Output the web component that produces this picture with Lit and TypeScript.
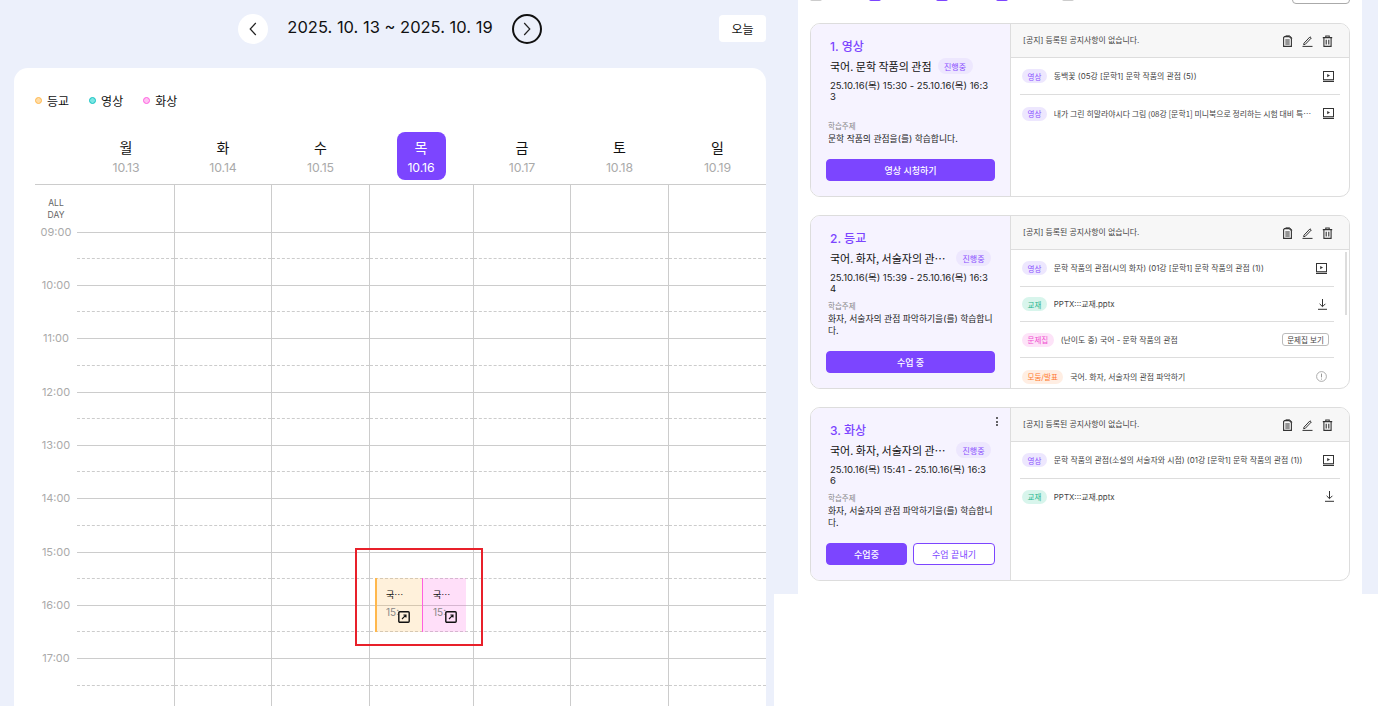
import { LitElement, css, html, svg } from "lit";
import { customElement } from "lit/decorators.js";

type ItemKind = "video" | "book" | "quiz" | "group";

interface LessonItem {
	kind: ItemKind;
	label: string;
	text: string;
	action: "play" | "download" | "quizBtn" | "info";
	long?: boolean;
}

interface Lesson {
	title: string;
	name: string;
	date: string;
	topic: string;
	buttons: string[];
	more?: boolean;
	scroll?: boolean;
	items: LessonItem[];
}

const lessons: Lesson[] = [
	{
		title: "1. 영상",
		name: "국어. 문학 작품의 관점",
		date: "25.10.16(목) 15:30 - 25.10.16(목) 16:33",
		topic: "문학 작품의 관점을(를) 학습합니다.",
		buttons: ["영상 시청하기"],
		items: [
			{ kind: "video", label: "영상", text: "동백꽃 (05강 [문학1] 문학 작품의 관점 (5))", action: "play" },
			{ kind: "video", label: "영상", text: "내가 그린 히말라야시다 그림 (08강 [문학1] 미니북으로 정리하는 시험 대비 특별 강의)", action: "play", long: true },
		],
	},
	{
		title: "2. 등교",
		name: "국어. 화자, 서술자의 관점 파악하기",
		date: "25.10.16(목) 15:39 - 25.10.16(목) 16:34",
		topic: "화자, 서술자의 관점 파악하기을(를) 학습합니다.",
		buttons: ["수업 중"],
		scroll: true,
		items: [
			{ kind: "video", label: "영상", text: "문학 작품의 관점(시의 화자) (01강 [문학1] 문학 작품의 관점 (1))", action: "play" },
			{ kind: "book", label: "교재", text: "PPTX:::교재.pptx", action: "download" },
			{ kind: "quiz", label: "문제집", text: "(난이도 중) 국어 - 문학 작품의 관점", action: "quizBtn" },
			{ kind: "group", label: "모둠/발표", text: "국어. 화자, 서술자의 관점 파악하기", action: "info" },
		],
	},
	{
		title: "3. 화상",
		name: "국어. 화자, 서술자의 관점 파악하기",
		date: "25.10.16(목) 15:41 - 25.10.16(목) 16:36",
		topic: "화자, 서술자의 관점 파악하기을(를) 학습합니다.",
		buttons: ["수업중", "수업 끝내기"],
		more: true,
		items: [
			{ kind: "video", label: "영상", text: "문학 작품의 관점(소설의 서술자와 시점) (01강 [문학1] 문학 작품의 관점 (1))", action: "play" },
			{ kind: "book", label: "교재", text: "PPTX:::교재.pptx", action: "download" },
		],
	},
];

const days = [
	{ name: "월", date: "10.13" },
	{ name: "화", date: "10.14" },
	{ name: "수", date: "10.15" },
	{ name: "목", date: "10.16", active: true },
	{ name: "금", date: "10.17" },
	{ name: "토", date: "10.18" },
	{ name: "일", date: "10.19" },
];

const hours = ["09:00", "10:00", "11:00", "12:00", "13:00", "14:00", "15:00", "16:00", "17:00"];

const events = [
	{ left: 340, width: 47, top: 393, height: 54, cls: "orange" },
	{ left: 387, width: 44, top: 393, height: 54, cls: "pink" },
];

const docIcon = svg`<svg class="ico" width="11" height="12" viewBox="0 0 11 12" fill="none" stroke="#333" stroke-width="1.1"><path d="M2.6 1.6h4.6l2.2 2v7.8H1.6V2.6z"/><path d="M3.6.7h4l2.6 2.4" stroke-width=".8"/><path d="M3.3 5h4.4M3.3 7h4.4M3.3 9h4.4"/></svg>`;
const penIcon = svg`<svg class="ico" width="11" height="12" viewBox="0 0 11 12" fill="none" stroke="#333" stroke-width="1"><path d="M2 8.2 8 1.8l1.3 1.2-6 6.3-1.7.4z"/><path d="M.5 11.4h10"/></svg>`;
const trashIcon = svg`<svg class="ico" width="11" height="12" viewBox="0 0 11 12" fill="none" stroke="#333" stroke-width="1.1"><path d="M.8 2.6h9.4M3.8 2.4V1h3.4v1.4"/><path d="M1.9 2.8v8.6h7.2V2.8"/><path d="M4.2 4.8v4.6M6.8 4.8v4.6"/></svg>`;
const playIcon = svg`<svg class="ico" width="11" height="11" viewBox="0 0 11 11" fill="none" stroke="#333"><rect x=".5" y=".5" width="10" height="8.2"/><path d="M4.2 2.9v3.4l2.8-1.7z" fill="#333" stroke="none"/><path d="M0 10.4h11" stroke-width="1.1"/></svg>`;
const downloadIcon = svg`<svg class="ico" width="9" height="11" viewBox="0 0 9 11" fill="none" stroke="#333"><path d="M4.5 0v7.4M1.6 4.8l2.9 2.9 2.9-2.9"/><path d="M0 10.3h9"/></svg>`;
const infoIcon = svg`<svg class="ico" width="11" height="11" viewBox="0 0 11 11" fill="none" stroke="#999" stroke-width=".8"><circle cx="5.5" cy="5.5" r="4.9"/><path d="M5.5 2.6v3.8M5.5 7.6v1" stroke-width="1"/></svg>`;
const linkIcon = svg`<svg class="link" width="12" height="12" viewBox="0 0 12 12" fill="none" stroke="#111"><rect x=".8" y=".8" width="10.4" height="10.4" rx="1" stroke-width="1.4"/><path d="M4 8l3.6-3.6M5.4 4h2.6v2.6" stroke-width="1.1"/></svg>`;

@customElement("app-root")
export class AppRoot extends LitElement {
	static override styles = css`
		:host {
			display: flex;
			height: 706px;
			overflow: hidden;
			background: #fff;
			font-family: Inter, "Noto Sans CJK KR", sans-serif;
			color: #111;
		}

		.left {
			width: 774px;
			flex: none;
			box-sizing: border-box;
			padding: 14px 8px 0 14px;
			background: #ecf0fb;
		}

		.top {
			display: grid;
			grid-template-columns: 1fr auto 1fr;
			align-items: start;
			height: 54px;
		}

		.nav {
			grid-column: 2;
			display: flex;
			align-items: center;
			gap: 19px;
			height: 30px;
		}

		.round {
			box-sizing: border-box;
			width: 30px;
			height: 30px;
			border-radius: 50%;
			background: #fff;
			display: flex;
			align-items: center;
			justify-content: center;
		}

		.round.focus {
			background: transparent;
			border: 2px solid #111;
		}

		.range {
			font-size: 16.5px;
			white-space: nowrap;
			padding-bottom: 5px;
		}

		.today {
			grid-column: 3;
			justify-self: end;
			width: 47px;
			height: 27px;
			margin-top: 1px;
			border-radius: 4px;
			background: #fff;
			font-size: 12px;
			display: flex;
			align-items: center;
			justify-content: center;
		}

		.calendar {
			background: #fff;
			border-radius: 14px 14px 0 0;
			padding-left: 21px;
			height: 640px;
		}

		.legend {
			display: flex;
			height: 64px;
			padding-top: 24px;
			box-sizing: border-box;
			gap: 20px;
			font-size: 12px;
		}

		.legend span {
			display: flex;
			align-items: center;
			gap: 5px;
			height: 16px;
		}

		.legend i {
			box-sizing: border-box;
			width: 7px;
			height: 7px;
			border-radius: 50%;
			border: 1px solid;
		}

		.legend .orange { background: #ffdca6; border-color: #ffb84d; }
		.legend .teal { background: #7ce6e3; border-color: #14c2c2; }
		.legend .pink { background: #ffc2f2; border-color: #ff5fe0; }

		.cols {
			display: grid;
			grid-template-columns: 42px 97px 97px 98px 104px 97px 98px 98px;
		}

		.week {
			height: 53px;
			box-sizing: border-box;
			border-bottom: 1px solid #ccc;
			padding-bottom: 4px;
		}

		.day {
			display: flex;
			flex-direction: column;
			align-items: center;
			justify-content: center;
			gap: 3px;
			padding-left: 1px;
		}

		.day b {
			font-weight: 400;
			font-size: 14px;
			line-height: 20px;
		}

		.day small {
			font-size: 12.3px;
			line-height: 14px;
			letter-spacing: -0.1px;
			color: #aaa;
		}

		.day.active small,
		.day.active b {
			color: #fff;
		}

		.day.active {
			width: 49px;
			padding-left: 0;
			justify-self: center;
			border-radius: 8px;
			background: #7c45ff;
		}

		.body {
			position: relative;
		}

		.allday {
			height: 46.6px;
		}

		.allday .label {
			font-size: 8.5px;
			line-height: 12px;
			color: #666;
			text-align: center;
			padding-top: 12px;
		}

		.cell {
			border-left: 1px solid #ccc;
		}

		.cell.first {
			border-left: 0;
		}

		.row {
			height: 53.33px;
		}

		.row .cell {
			border-top: 1px solid #ccc;
			box-sizing: border-box;
		}

		.half {
			height: 26.33px;
			box-sizing: border-box;
			border-bottom: 1px dashed #ccc;
		}

		.time {
			font-size: 11px;
			line-height: 14px;
			color: #aaa;
			text-align: center;
			transform: translateY(-7px);
		}

		.event {
			position: absolute;
			box-sizing: border-box;
			padding: 10px 0 0 9px;
			font-size: 9px;
			border-left: 2px solid;
		}

		.event.orange { background: rgba(255, 184, 77, 0.2); border-color: #ffb84d; }
		.event.pink { background: rgba(255, 95, 224, 0.2); border-color: #ff5fe0; border-left-width: 1px; padding-left: 10px; }

		.event .name {
			width: 21px;
			line-height: 14px;
			font-family: "Noto Sans CJK JP", Inter, sans-serif;
			white-space: nowrap;
			overflow: hidden;
			text-overflow: ellipsis;
		}

		.event .at {
			width: 13px;
			margin-top: 4px;
			font-size: 10px;
			line-height: 12px;
			overflow: hidden;
			white-space: nowrap;
			color: #888;
		}

		.link {
			position: absolute;
			left: 21px;
			top: 33px;
		}

		.event.pink .link {
			left: 22px;
		}

		.mark {
			position: absolute;
			left: 320px;
			top: 363px;
			width: 128px;
			height: 98px;
			box-sizing: border-box;
			border: 2px solid #e8202a;
		}

		.right {
			width: 604px;
			flex: none;
			height: 594px;
			box-sizing: border-box;
			padding: 0 16px 0 24px;
			background: #ecf0fb;
		}

		.panel {
			height: 100%;
			background: #fff;
			overflow: hidden;
			padding: 0 12px;
			box-sizing: border-box;
		}

		.filters {
			height: 4px;
			display: grid;
			grid-template-columns: 59px 67px 60px 66px 1fr auto;
			align-items: start;
		}

		.check {
			width: 12px;
			height: 12px;
			margin-top: -11px;
			border-radius: 2px;
			background: #ccc;
		}

		.check.on {
			background: #7c45ff;
		}

		.filter-btn {
			grid-column: 6;
			width: 58px;
			height: 20px;
			margin-top: -16px;
			box-sizing: border-box;
			border: 1px solid #aaa;
			border-radius: 4px;
		}

		.lessons {
			display: flex;
			flex-direction: column;
			gap: 18px;
			margin-top: 19px;
		}

		.lesson {
			height: 174px;
			box-sizing: border-box;
			display: flex;
			border: 1px solid #ddd;
			border-radius: 10px;
			overflow: hidden;
		}

		.info {
			position: relative;
			width: 200px;
			flex: none;
			box-sizing: border-box;
			padding: 14px 15px 15px;
			display: flex;
			flex-direction: column;
			background: #f6f3ff;
			border-right: 1px solid #ddd;
		}

		.more {
			position: absolute;
			top: 9px;
			right: 12px;
			display: flex;
			flex-direction: column;
			gap: 1.5px;
		}

		.more i {
			width: 2px;
			height: 2px;
			border-radius: 50%;
			background: #333;
		}

		.title {
			padding-left: 4px;
			font-size: 12px;
			line-height: 18px;
			font-weight: 500;
			color: #7c45ff;
		}

		.head {
			display: flex;
			align-items: center;
			gap: 6px;
			margin-top: 1px;
			padding-left: 4px;
			height: 18px;
		}

		.head .name {
			max-width: 120px;
			font-family: "Noto Sans CJK JP", Inter, sans-serif;
			font-size: 11px;
			font-weight: 400;
			white-space: nowrap;
			overflow: hidden;
			text-overflow: ellipsis;
		}

		.state {
			flex: none;
			width: 35px;
			height: 16px;
			border-radius: 8px;
			background: #ede7fe;
			color: #8a4fff;
			font-size: 8px;
			display: flex;
			align-items: center;
			justify-content: center;
		}

		.date {
			margin-top: 5px;
			padding-left: 4px;
			width: 160px;
			font-size: 9.5px;
			line-height: 11px;
			word-break: break-all;
			color: #222;
		}

		.topic {
			margin-top: auto;
			margin-bottom: 14px;
			padding-left: 2px;
		}

		.topic small {
			display: block;
			font-size: 7.5px;
			line-height: 11px;
			color: #888;
		}

		.topic p {
			margin: 1px 0 0;
			font-size: 8.8px;
			line-height: 12px;
			color: #222;
			word-break: break-all;
		}

		.buttons {
			display: flex;
			gap: 6px;
		}

		.btn {
			flex: 1;
			height: 22px;
			box-sizing: border-box;
			border-radius: 4px;
			background: #7c45ff;
			border: 1px solid #7c45ff;
			color: #fff;
			font-size: 9px;
			font-weight: 500;
			display: flex;
			align-items: center;
			justify-content: center;
		}

		.btn.line {
			flex: 0 0 82px;
			background: #fff;
			color: #7c45ff;
			font-weight: 400;
		}

		.detail {
			position: relative;
			flex: 1;
			min-width: 0;
		}

		.notice {
			height: 34px;
			box-sizing: border-box;
			padding: 0 16px 0 12px;
			display: flex;
			align-items: center;
			background: #f7f7f7;
			border-bottom: 1px solid #ddd;
			font-size: 7.9px;
			color: #444;
		}

		.notice span {
			flex: 1;
			padding-bottom: 3px;
		}

		.tools {
			display: flex;
			gap: 9px;
		}

		.ico {
			display: block;
			flex: none;
		}

		.items {
			padding: 0 9px;
		}

		.scroll .items {
			padding-right: 15px;
		}

		.item {
			height: 37px;
			box-sizing: border-box;
			display: flex;
			align-items: center;
			padding: 0 6px 0 2px;
			gap: 7px;
			border-bottom: 1px solid #ddd;
			font-size: 7.9px;
			color: #444;
		}

		.scroll .item {
			padding-right: 7px;
		}

		.item:last-child {
			border-bottom: 0;
		}

		.item.book { height: 35px; }
		.item.quiz { height: 36px; }
		.scroll .item.quiz { padding-right: 5px; }

		.item .text {
			flex: 1;
			min-width: 0;
			padding-bottom: 1px;
			white-space: nowrap;
			overflow: hidden;
			text-overflow: ellipsis;
		}

		.item .text.long {
			font-family: "Noto Sans CJK JP", Inter, sans-serif;
		}

		.chip {
			flex: none;
			height: 14px;
			padding: 0 5.5px;
			border-radius: 7px;
			font-size: 7.5px;
			display: flex;
			align-items: center;
			justify-content: center;
		}

		.chip.video { background: #ede7fe; color: #8a4fff; }
		.chip.book { background: #d8f5ec; color: #1fb58f; }
		.chip.quiz { background: #fde3f8; color: #f04fd0; }
		.chip.group { background: #ffeee3; color: #ff7a30; }

		.quiz-btn {
			flex: none;
			width: 47px;
			height: 13px;
			box-sizing: border-box;
			border: 1px solid #bbb;
			border-radius: 3px;
			font-size: 7.5px;
			color: #444;
			display: flex;
			align-items: center;
			justify-content: center;
		}

		.bar {
			position: absolute;
			right: 2px;
			top: 36px;
			width: 2px;
			height: 63px;
			background: #ddd;
		}
	`;

	private renderAction(item: LessonItem) {
		if (item.action === "play") return playIcon;
		if (item.action === "download") return downloadIcon;
		if (item.action === "info") return infoIcon;
		return html`<div class="quiz-btn">문제집 보기</div>`;
	}

	private renderLesson(l: Lesson) {
		return html`
			<section class="lesson ${l.scroll ? "scroll" : ""}">
				<div class="info">
					${l.more ? html`<div class="more"><i></i><i></i><i></i></div>` : ""}
					<div class="title">${l.title}</div>
					<div class="head">
						<span class="name">${l.name}</span>
						<span class="state">진행중</span>
					</div>
					<div class="date">${l.date}</div>
					<div class="topic">
						<small>학습주제</small>
						<p>${l.topic}</p>
					</div>
					<div class="buttons">
						${l.buttons.map((b, i) => html`<div class="btn ${i ? "line" : ""}">${b}</div>`)}
					</div>
				</div>
				<div class="detail">
					<div class="notice">
						<span>[공지] 등록된 공지사항이 없습니다.</span>
						<div class="tools">${docIcon}${penIcon}${trashIcon}</div>
					</div>
					<div class="items">
						${l.items.map(
							(it) => html`
								<div class="item ${it.kind}">
									<span class="chip ${it.kind}">${it.label}</span>
									<span class="text ${it.long ? "long" : ""}">${it.text}</span>
									${this.renderAction(it)}
								</div>
							`,
						)}
					</div>
					${l.scroll ? html`<div class="bar"></div>` : ""}
				</div>
			</section>
		`;
	}

	override render() {
		return html`
			<div class="left">
				<div class="top">
					<div class="nav">
						<div class="round">
							<svg width="8" height="14" viewBox="0 0 8 14" fill="none" stroke="#222" stroke-width="1.2"><path d="M6.8 1 1.2 7l5.6 6"/></svg>
						</div>
						<div class="range">2025. 10. 13 ~ 2025. 10. 19</div>
						<div class="round focus">
							<svg width="8" height="14" viewBox="0 0 8 14" fill="none" stroke="#222" stroke-width="1.2"><path d="M1.2 1 6.8 7l-5.6 6"/></svg>
						</div>
					</div>
					<div class="today">오늘</div>
				</div>
				<div class="calendar">
					<div class="legend">
						<span><i class="orange"></i>등교</span>
						<span><i class="teal"></i>영상</span>
						<span><i class="pink"></i>화상</span>
					</div>
					<div class="cols week">
						<div></div>
						${days.map(
							(d) => html`
								<div class="day ${d.active ? "active" : ""}">
									<b>${d.name}</b>
									<small>${d.date}</small>
								</div>
							`,
						)}
					</div>
					<div class="body">
						<div class="cols allday">
							<div class="label">ALL<br />DAY</div>
							${days.map((_, i) => html`<div class="cell ${i ? "" : "first"}"></div>`)}
						</div>
						${hours.map(
							(h) => html`
								<div class="cols row">
									<div class="time">${h}</div>
									${days.map(
										(_, i) => html`<div class="cell ${i ? "" : "first"}"><div class="half"></div></div>`,
									)}
								</div>
							`,
						)}
						${events.map(
							(e) => html`
								<div
									class="event ${e.cls}"
									style="left:${e.left}px;top:${e.top}px;width:${e.width}px;height:${e.height}px"
								>
									<div class="name">국어. 화자</div>
									<div class="at">15:39</div>
									${linkIcon}
								</div>
							`,
						)}
						<div class="mark"></div>
					</div>
				</div>
			</div>
			<div class="right">
				<div class="panel">
					<div class="filters">
						<div class="check"></div>
						<div class="check on"></div>
						<div class="check on"></div>
						<div class="check on"></div>
						<div class="check"></div>
						<div class="filter-btn"></div>
					</div>
					<div class="lessons">${lessons.map((l) => this.renderLesson(l))}</div>
				</div>
			</div>
		`;
	}
}
